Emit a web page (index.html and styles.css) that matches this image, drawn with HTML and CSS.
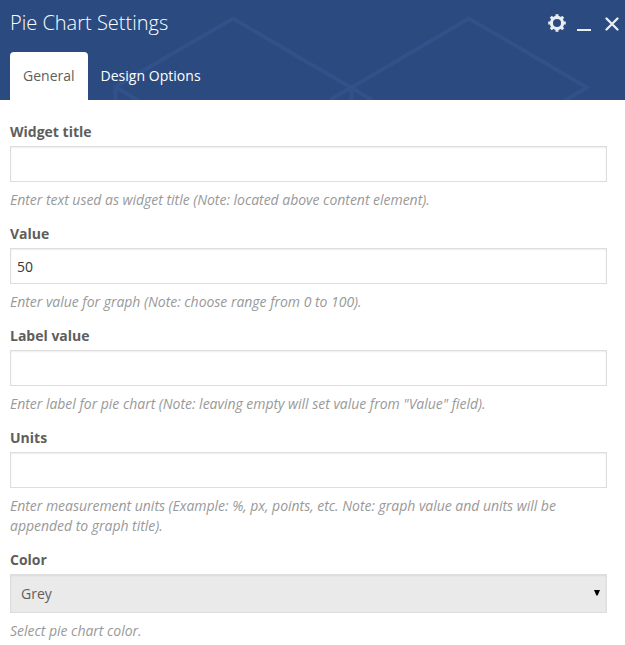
FILE: index.html
```html
<!DOCTYPE html>
<html lang="en">
<head>
<meta charset="utf-8">
<title>Pie Chart Settings</title>
<link rel="stylesheet" href="styles.css">
</head>
<body>
<header class="panel-header">
  <svg class="pattern" width="625" height="100" viewBox="0 0 625 100" aria-hidden="true">
    <path d="M233 18.500L113.500 88M233 18.500L372 100M330 100L469 18.500L587 87.500L564 101M115.500 86V100M115.500 87L139 101M351.500 88V100"/>
  </svg>
  <div class="title-row">
    <h1>Pie Chart Settings</h1>
    <div class="controls">
      <button class="control" aria-label="Settings"><svg width="18" height="18" viewBox="0 0 18 18" fill="none" stroke="#eaedf2"><circle cx="9" cy="9" r="5.600" stroke-width="3.200"/><path stroke-width="3" d="M9 .2V3M9 15v2.800M.2 9H3M15 9h2.800M2.800 2.800l2 2M13.200 13.200l2 2M15.200 2.800l-2 2M4.800 13.200l-2 2"/></svg></button>
      <button class="control" aria-label="Minimize"><svg width="14" height="18" viewBox="0 0 14 18"><path fill="#eaedf2" d="M0 15h14v2H0z"/></svg></button>
      <button class="control" aria-label="Close"><svg width="14" height="18" viewBox="0 0 14 18"><path stroke="#eaedf2" stroke-width="2.300" stroke-linecap="round" d="M1.500 4.500L12.500 15.500M12.500 4.500L1.500 15.500"/></svg></button>
    </div>
  </div>
  <nav class="tabs">
    <a class="tab active">General</a>
    <a class="tab">Design Options</a>
  </nav>
</header>
<main class="form">
  <div class="field">
    <label for="title">Widget title</label>
    <input id="title" type="text">
    <p>Enter text used as widget title (Note: located above content element).</p>
  </div>
  <div class="field">
    <label for="value">Value</label>
    <input id="value" type="text" value="50">
    <p>Enter value for graph (Note: choose range from 0 to 100).</p>
  </div>
  <div class="field">
    <label for="label">Label value</label>
    <input id="label" type="text">
    <p>Enter label for pie chart (Note: leaving empty will set value from "Value" field).</p>
  </div>
  <div class="field">
    <label for="units">Units</label>
    <input id="units" type="text">
    <p>Enter measurement units (Example: %, px, points, etc. Note: graph value and units will be appended to graph title).</p>
  </div>
  <div class="field">
    <label>Color</label>
    <div class="select" role="combobox"><span>Grey</span><svg width="6" height="6" viewBox="0 0 6 6"><path d="M0 0h6L3.600 5.500H2.400z"/></svg></div>
    <p>Select pie chart color.</p>
  </div>
</main>
</body>
</html>
```
FILE: styles.css
```css
* { box-sizing: border-box; }
body {
  margin: 0;
  height: 645px;
  overflow: hidden;
  background: #fff;
  font: 14px/20px "Open Sans", sans-serif;
  color: #5e5e5e;
}
.panel-header {
  position: relative;
  height: 100px;
  background: #2b4b80;
  display: flex;
  flex-direction: column;
  justify-content: space-between;
}
.pattern { position: absolute; top: 0; left: 0; }
.pattern path { fill: none; stroke: #305189; stroke-width: 4; }
.title-row {
  position: relative;
  display: flex;
  justify-content: space-between;
  padding: 8px 6px 0 10px;
}
h1 { margin: 0; font-size: 20px; line-height: 30px; font-weight: 300; color: #fff; }
.controls { display: flex; gap: 12px; padding-top: 6px; }
.control { border: 0; padding: 0; background: none; height: 18px; }
.control svg { display: block; }
.control:first-child { margin-right: -1px; }
.control:last-child { margin-left: 2px; }
.tabs { position: relative; display: flex; padding-left: 10px; }
.tab { height: 48px; line-height: 48px; padding: 0 12.5px; color: #fff; letter-spacing: .03px; }
.tab.active {
  width: 78px;
  padding: 0 13px;
  background: #fff;
  color: #5e5e5e;
  border-radius: 4px 4px 0 0;
  letter-spacing: 0;
}
.form { padding: 22px 18px 0 10px; }
.field { margin-bottom: 14px; }
label { display: block; font-weight: 700; margin-bottom: 4px; }
input, .select {
  width: 100%;
  border: 1px solid #ddd;
  box-shadow: inset 0 1px 2px rgba(0, 0, 0, .07);
}
input {
  display: block;
  height: 36px;
  padding: 0 6px;
  font: inherit;
  color: #32373c;
  background: #fff;
  outline: 0;
}
.select {
  display: flex;
  align-items: center;
  justify-content: space-between;
  height: 39px;
  padding: 0 6px 0 10px;
  background: #eaeaea;
}
.select svg { margin-top: -2px; }
.field p { margin: 8px 0 0; font-style: italic; color: #999; letter-spacing: -.025px; }
```
